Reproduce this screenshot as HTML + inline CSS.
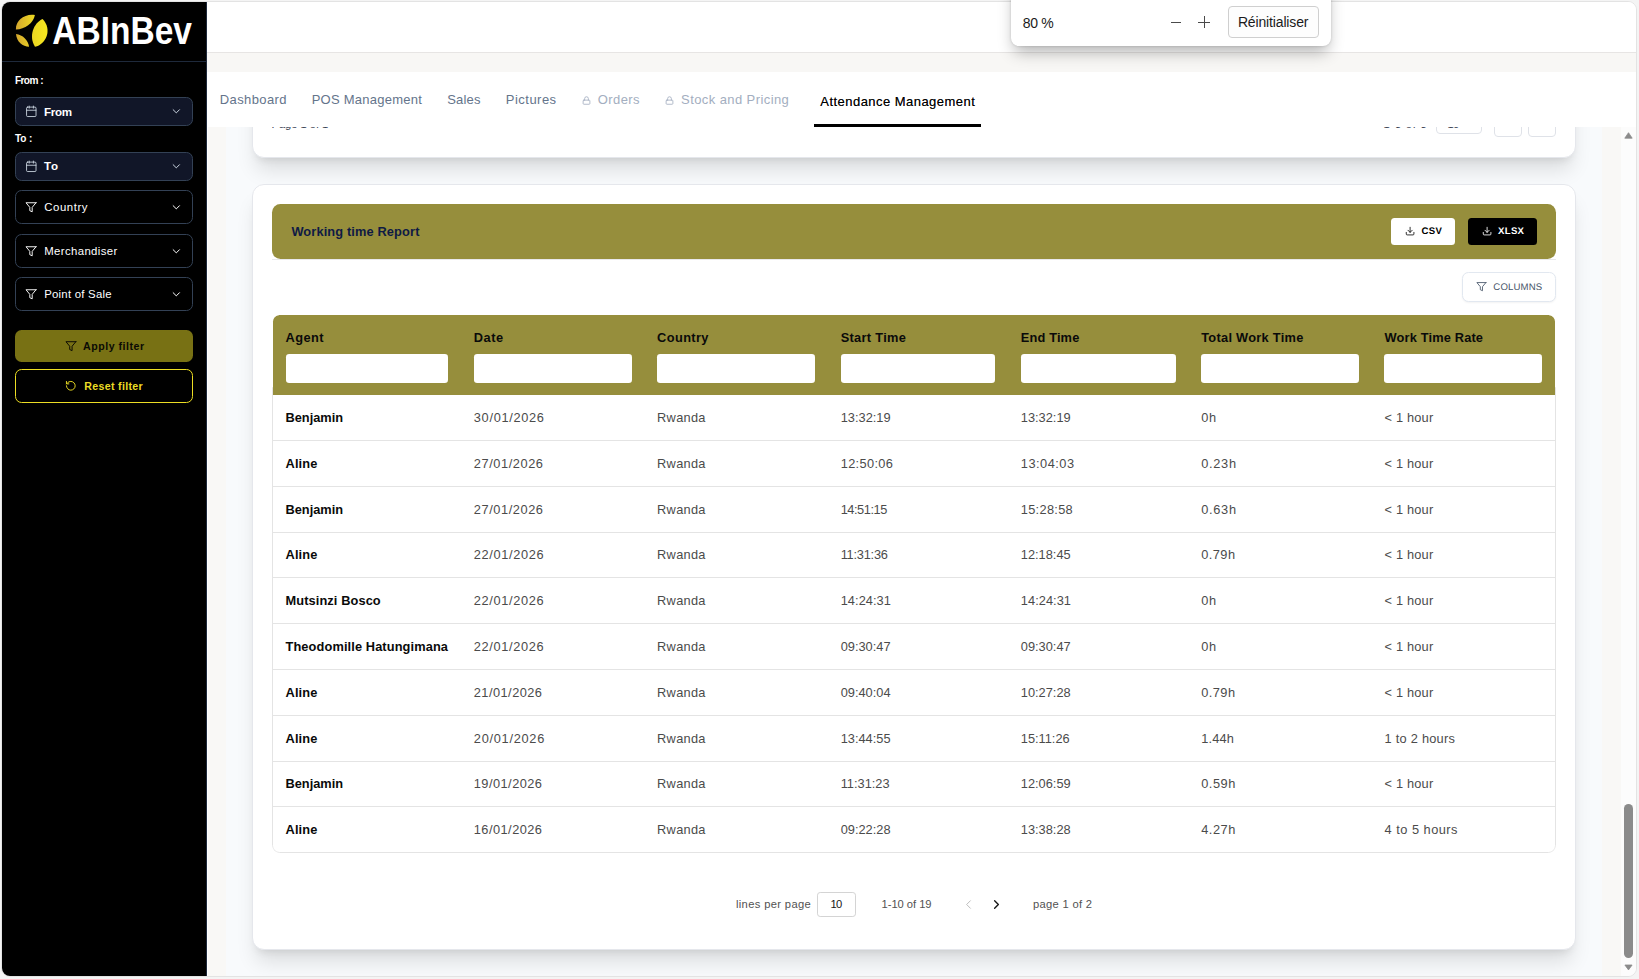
<!DOCTYPE html>
<html lang="en"><head><meta charset="utf-8"><title>Attendance Management</title>
<style>
html,body{margin:0;padding:0}
body{width:1639px;height:979px;overflow:hidden;background:#f4f4f4;font-family:"Liberation Sans", Arial, sans-serif;position:relative}
#win{position:absolute;left:1px;top:1px;width:1633.6px;height:974px;border:1px solid #e3e3e3;border-radius:9px;overflow:hidden;background:#fff}
#pg{position:absolute;left:-2px;top:-2px;width:1639px;height:979px}
.t{position:absolute;white-space:pre;line-height:1;display:block}
.sh{}
.gp{text-rendering:geometricPrecision}
.sb{text-shadow:0 0 .3px rgba(0,0,0,.55)}
.ic{position:absolute;display:block;overflow:visible}
#side{position:absolute;left:2px;top:2px;width:203.6px;height:974px;background:#000;border-right:1px solid #1e293b}
#side>*{margin-left:-2px;margin-top:-2px}
.sep{position:absolute;left:2px;width:205px;height:1px;background:#1e293b}
.sel{position:absolute;left:15.1px;width:177.7px;box-sizing:border-box;border:1px solid #334155;border-radius:6.5px;background:#000}
.sel.dk{background:#111628}
.btn{position:absolute;left:15.1px;width:177.7px;box-sizing:border-box;border-radius:6.5px}
.apply{background:#787114}
.reset{border:1px solid #ecdd24;background:#000}
#hdr{position:absolute;left:206.6px;top:2px;width:1430px;height:50px;background:#fff;border-bottom:1px solid #e7e5e4}
#strip{position:absolute;left:206.6px;top:53px;width:1430px;height:18.5px;background:#f8f7f5}
#tabs{position:absolute;left:206.6px;top:71.5px;width:1430px;height:55.5px;background:#fff}
#tabline{position:absolute;left:814px;top:124px;width:167.3px;height:3px;background:#000}
#scroll{position:absolute;left:208.4px;top:127px;width:1413.1px;height:850px;background:#f9f8f6;overflow:hidden}
#inner{position:absolute;left:17.6px;top:0;width:1376px;height:850px;background:#f8fafc}
.card{position:absolute;left:43.7px;width:1323.6px;background:#fff;border-radius:12px;box-sizing:border-box;border:1px solid #e5e7ec;box-shadow:0 16px 20px -4px rgba(0,0,0,.115),0 6px 8px -5px rgba(0,0,0,.11)}
#card1{top:-100px;height:131px}
#card2{top:56.9px;height:766.4px}
#clip1{position:absolute;left:207.5px;top:127px;width:1414px;height:14px;overflow:hidden}
#clip1>*{margin-left:-207.5px;margin-top:-127px}
.mini{position:absolute;box-sizing:border-box;border:1px solid #dfe2e8;border-radius:4px;background:#fff}
#chead{position:absolute;left:272.3px;top:204px;width:1283.7px;height:54.7px;background:#968e3c;border-radius:8.5px}
#cline{position:absolute;left:272.3px;top:258.7px;width:1283.7px;height:1px;background:#e8e8ea}
.xb{position:absolute;top:218px;height:27px;border-radius:3.5px}
#colbtn{position:absolute;left:1462.2px;top:272.3px;width:93.6px;height:29.3px;box-sizing:border-box;border:1px solid #e2e8f0;border-radius:6.5px;background:#fff;box-shadow:0 1px 2px rgba(0,0,0,.05)}
#tbl{position:absolute;left:272px;top:315px;width:1284px;height:538px;border-radius:7.5px;overflow:hidden;background:#fff}
#tbody{position:absolute;left:0;top:72px;width:1284px;height:466px;box-sizing:border-box;border:1px solid #e4e4e4;border-radius:0 0 7.5px 7.5px}
#thead{position:absolute;left:1px;top:0;width:1282px;height:79.6px;background:#968e3c;border-radius:6.5px 6.5px 0 0}
.rl{position:absolute;left:1px;width:1282px;height:1px;background:#e4e4e4}
.fin{position:absolute;top:354.3px;height:28.7px;background:#fff;border-radius:3.2px}
#lpp{position:absolute;left:817px;top:892px;width:38.8px;height:24.8px;box-sizing:border-box;border:1px solid #d4d4d4;border-radius:3.2px;background:#fff}
#sbar{position:absolute;left:1621px;top:127px;width:16px;height:850px;background:#fcfcfc}
#thumb{position:absolute;left:3.1px;top:676.8px;width:9px;height:154px;border-radius:4.5px;background:#8b8b8b}
#pop{position:absolute;left:0;top:0;width:1639px;height:100px}
#zp{position:absolute;left:1010.9px;top:-20px;width:320.2px;height:66.1px;background:#fff;border-radius:8px;box-shadow:0 9px 16px -3px rgba(0,0,0,.30),0 0 2.5px rgba(0,0,0,.16)}
.zl{position:absolute;background:#4a4a4a}
#zbtn{position:absolute;left:1228.3px;top:6.1px;width:90.5px;height:31.7px;box-sizing:border-box;border:1px solid #cfcfcf;border-radius:4px;background:#fdfdfd}
</style></head>
<body>
<div id="win"><div id="pg">
<div id="side">
<svg class="ic" style="left:14px;top:13px" width="180" height="36" viewBox="14 13 180 36">
<defs><linearGradient id="lg" x1="16" y1="0" x2="48" y2="0" gradientUnits="userSpaceOnUse"><stop offset="0" stop-color="#d3a62e"/><stop offset="0.55" stop-color="#ecd722"/><stop offset="1" stop-color="#f6e81f"/></linearGradient></defs>
<path fill="url(#lg)" d="M34.9 15.1 C25 13.4 15.3 20.4 15.9 29.5 C24.5 29.6 33.4 23.6 34.9 15.1 Z"/>
<path fill="url(#lg)" d="M16 34 C16.6 41.9 22.6 46.6 29.1 46.8 C28 40 22.8 34.8 16 34 Z"/>
<path fill="url(#lg)" d="M42.6 19 C33.4 23 28.4 36.5 35 46.8 C45.8 44.6 52.8 29.6 42.6 19 Z"/>
<text x="52.3" y="43.9" font-family='"Liberation Sans", Arial, sans-serif' font-weight="700" font-size="38.3" fill="#fff" textLength="139.7" lengthAdjust="spacingAndGlyphs">ABInBev</text>
</svg>
<div class="sep" style="top:61px"></div>
<span class="t " id="t0" style="left:14.90px;top:76.01px;font-size:10.1px;font-weight:700;color:#fff;letter-spacing:-0.560px;">From :</span>
<div class="sel dk" style="top:97.3px;height:28.4px"></div>
<svg class="ic" style="left:24.90px;top:104.90px" width="12.60" height="12.60" viewBox="0 0 24 24" fill="none" stroke="#cbd5e1" stroke-width="1.7" stroke-linecap="round" stroke-linejoin="round" ><path d="M8 2v4"/><path d="M16 2v4"/><rect x="3" y="4" width="18" height="18" rx="2"/><path d="M3 10h18"/></svg>
<span class="t " id="t1" style="left:44.10px;top:106.01px;font-size:11.6px;font-weight:700;color:#fff;letter-spacing:-0.357px;">From</span>
<svg class="ic" style="left:170.30px;top:105.40px" width="12.60" height="12.60" viewBox="0 0 24 24" fill="none" stroke="#cbd5e1" stroke-width="1.9" stroke-linecap="round" stroke-linejoin="round" ><path d="m6 9 6 6 6-6"/></svg>
<span class="t " id="t2" style="left:14.90px;top:134.01px;font-size:10.1px;font-weight:700;color:#fff;letter-spacing:-0.114px;">To :</span>
<div class="sel dk" style="top:152.3px;height:28.3px"></div>
<svg class="ic" style="left:24.90px;top:159.90px" width="12.60" height="12.60" viewBox="0 0 24 24" fill="none" stroke="#cbd5e1" stroke-width="1.7" stroke-linecap="round" stroke-linejoin="round" ><path d="M8 2v4"/><path d="M16 2v4"/><rect x="3" y="4" width="18" height="18" rx="2"/><path d="M3 10h18"/></svg>
<span class="t " id="t3" style="left:44.10px;top:160.01px;font-size:11.6px;font-weight:700;color:#fff;letter-spacing:0.699px;">To</span>
<svg class="ic" style="left:170.30px;top:160.40px" width="12.60" height="12.60" viewBox="0 0 24 24" fill="none" stroke="#cbd5e1" stroke-width="1.9" stroke-linecap="round" stroke-linejoin="round" ><path d="m6 9 6 6 6-6"/></svg>
<div class="sel" style="top:190.2px;height:33.7px"></div>
<svg class="ic" style="left:25.40px;top:201.20px" width="12.00" height="12.00" viewBox="0 0 24 24" fill="none" stroke="#fff" stroke-width="1.9" stroke-linecap="round" stroke-linejoin="round" ><path d="M22 3.5H2l7.6 9.2V19.4l4.8 2.2v-8.9L22 3.5z"/></svg>
<span class="t sh" id="t4" style="left:44.20px;top:202.01px;font-size:11.4px;font-weight:400;color:#fff;letter-spacing:0.568px;">Country</span>
<svg class="ic" style="left:170.30px;top:201.20px" width="12.60" height="12.60" viewBox="0 0 24 24" fill="none" stroke="#fff" stroke-width="1.9" stroke-linecap="round" stroke-linejoin="round" ><path d="m6 9 6 6 6-6"/></svg>
<div class="sel" style="top:234.0px;height:33.7px"></div>
<svg class="ic" style="left:25.40px;top:245.00px" width="12.00" height="12.00" viewBox="0 0 24 24" fill="none" stroke="#fff" stroke-width="1.9" stroke-linecap="round" stroke-linejoin="round" ><path d="M22 3.5H2l7.6 9.2V19.4l4.8 2.2v-8.9L22 3.5z"/></svg>
<span class="t sh" id="t5" style="left:44.20px;top:246.01px;font-size:11.4px;font-weight:400;color:#fff;letter-spacing:0.371px;">Merchandiser</span>
<svg class="ic" style="left:170.30px;top:245.00px" width="12.60" height="12.60" viewBox="0 0 24 24" fill="none" stroke="#fff" stroke-width="1.9" stroke-linecap="round" stroke-linejoin="round" ><path d="m6 9 6 6 6-6"/></svg>
<div class="sel" style="top:277.4px;height:33.7px"></div>
<svg class="ic" style="left:25.40px;top:288.40px" width="12.00" height="12.00" viewBox="0 0 24 24" fill="none" stroke="#fff" stroke-width="1.9" stroke-linecap="round" stroke-linejoin="round" ><path d="M22 3.5H2l7.6 9.2V19.4l4.8 2.2v-8.9L22 3.5z"/></svg>
<span class="t sh" id="t6" style="left:44.20px;top:289.01px;font-size:11.4px;font-weight:400;color:#fff;letter-spacing:0.234px;">Point of Sale</span>
<svg class="ic" style="left:170.30px;top:288.40px" width="12.60" height="12.60" viewBox="0 0 24 24" fill="none" stroke="#fff" stroke-width="1.9" stroke-linecap="round" stroke-linejoin="round" ><path d="m6 9 6 6 6-6"/></svg>
<div class="btn apply" style="top:330.1px;height:32px"></div>
<svg class="ic" style="left:64.60px;top:340.40px" width="11.80" height="11.80" viewBox="0 0 24 24" fill="none" stroke="#0b0a04" stroke-width="2" stroke-linecap="round" stroke-linejoin="round" ><path d="M22 3.5H2l7.6 9.2V19.4l4.8 2.2v-8.9L22 3.5z"/></svg>
<span class="t " id="t7" style="left:83.10px;top:341.01px;font-size:10.6px;font-weight:700;color:#0b0a04;letter-spacing:0.510px;">Apply filter</span>
<div class="btn reset" style="top:369.2px;height:33.7px"></div>
<svg class="ic" style="left:65.40px;top:379.80px" width="11.60" height="11.60" viewBox="0 0 24 24" fill="none" stroke="#ecdd24" stroke-width="2" stroke-linecap="round" stroke-linejoin="round" ><path d="M3 12a9 9 0 1 0 9-9 9.75 9.75 0 0 0-6.74 2.74L3 8"/><path d="M3 3v5h5"/></svg>
<span class="t " id="t8" style="left:84.20px;top:381.01px;font-size:10.6px;font-weight:700;color:#ecdd24;letter-spacing:0.343px;">Reset filter</span>
</div>
<div id="hdr"></div><div id="strip"></div><div id="tabs"></div>
<span class="t " id="t9" style="left:219.70px;top:93.00px;font-size:13px;font-weight:400;color:#64748b;letter-spacing:0.413px;">Dashboard</span>
<span class="t " id="t10" style="left:311.70px;top:93.00px;font-size:13px;font-weight:400;color:#64748b;letter-spacing:0.251px;">POS Management</span>
<span class="t " id="t11" style="left:447.20px;top:93.00px;font-size:13px;font-weight:400;color:#64748b;letter-spacing:0.195px;">Sales</span>
<span class="t " id="t12" style="left:505.80px;top:93.00px;font-size:13px;font-weight:400;color:#64748b;letter-spacing:0.477px;">Pictures</span>
<svg class="ic" style="left:582.40px;top:95.60px" width="9.00" height="9.00" viewBox="0 0 24 24" fill="none" stroke="#a3aec0" stroke-width="2.2" stroke-linecap="round" stroke-linejoin="round" ><rect x="3" y="11" width="18" height="11" rx="2"/><path d="M7 11V7a5 5 0 0 1 10 0v4"/></svg>
<span class="t " id="t13" style="left:597.80px;top:93.00px;font-size:13px;font-weight:400;color:#a3aec0;letter-spacing:0.415px;">Orders</span>
<svg class="ic" style="left:665.40px;top:95.60px" width="9.00" height="9.00" viewBox="0 0 24 24" fill="none" stroke="#a3aec0" stroke-width="2.2" stroke-linecap="round" stroke-linejoin="round" ><rect x="3" y="11" width="18" height="11" rx="2"/><path d="M7 11V7a5 5 0 0 1 10 0v4"/></svg>
<span class="t " id="t14" style="left:681.10px;top:93.00px;font-size:13px;font-weight:400;color:#a3aec0;letter-spacing:0.409px;">Stock and Pricing</span>
<span class="t sb" id="t15" style="left:820.30px;top:95.00px;font-size:13px;font-weight:400;color:#000;letter-spacing:0.461px;">Attendance Management</span>
<div id="tabline"></div>
<div id="scroll"><div id="inner"></div>
<div class="card" id="card1"></div>
<div class="card" id="card2"></div>
</div>
<div id="clip1">
<span class="t " id="t16" style="left:271.50px;top:119.00px;font-size:11.2px;font-weight:400;color:#374151;letter-spacing:-0.045px;">Page 1 of 1</span>
<span class="t " id="t17" style="left:1383.50px;top:119.00px;font-size:11.2px;font-weight:400;color:#374151;letter-spacing:0.750px;">1-3 of 3</span>
<div class="mini" style="left:1436px;top:108px;width:46px;height:25.5px"></div>
<div class="mini" style="left:1494.3px;top:108px;width:27.6px;height:29.4px"></div>
<div class="mini" style="left:1528.2px;top:108px;width:27.6px;height:29.4px"></div>
<span class="t " id="t18" style="left:1447.50px;top:119.00px;font-size:11.2px;font-weight:400;color:#374151;letter-spacing:-0.669px;">10</span>
</div>
<div id="chead"></div><div id="cline"></div>
<span class="t " id="t19" style="left:291.40px;top:226.01px;font-size:12.8px;font-weight:700;color:#0f1a44;letter-spacing:0.133px;">Working time Report</span>
<div class="xb" style="left:1391.1px;width:63.9px;background:#fff"></div>
<svg class="ic" style="left:1404.60px;top:226.00px" width="10.20" height="10.20" viewBox="0 0 24 24" fill="none" stroke="#111" stroke-width="2" stroke-linecap="round" stroke-linejoin="round" ><path d="M21 15v4a2 2 0 0 1-2 2H5a2 2 0 0 1-2-2v-4"/><path d="m7 10 5 5 5-5"/><path d="M12 15V3"/></svg>
<span class="t gp" id="t20" style="left:1421.50px;top:227.01px;font-size:9.6px;font-weight:700;color:#000;letter-spacing:0.319px;">CSV</span>
<div class="xb" style="left:1468px;width:69px;background:#000"></div>
<svg class="ic" style="left:1481.50px;top:226.00px" width="10.20" height="10.20" viewBox="0 0 24 24" fill="none" stroke="#fff" stroke-width="2" stroke-linecap="round" stroke-linejoin="round" ><path d="M21 15v4a2 2 0 0 1-2 2H5a2 2 0 0 1-2-2v-4"/><path d="m7 10 5 5 5-5"/><path d="M12 15V3"/></svg>
<span class="t gp" id="t21" style="left:1498.10px;top:227.01px;font-size:9.6px;font-weight:700;color:#fff;letter-spacing:0.270px;">XLSX</span>
<div id="colbtn"></div>
<svg class="ic" style="left:1476.20px;top:281.40px" width="10.80" height="10.80" viewBox="0 0 24 24" fill="none" stroke="#475569" stroke-width="1.9" stroke-linecap="round" stroke-linejoin="round" ><path d="M22 3.5H2l7.6 9.2V19.4l4.8 2.2v-8.9L22 3.5z"/></svg>
<span class="t gp" id="t22" style="left:1493.30px;top:283.01px;font-size:9.6px;font-weight:400;color:#475569;letter-spacing:0.165px;">COLUMNS</span>
<div id="tbl"><div id="tbody"></div><div id="thead"></div>
<div class="rl" style="top:125px"></div>
<div class="rl" style="top:171px"></div>
<div class="rl" style="top:217px"></div>
<div class="rl" style="top:262px"></div>
<div class="rl" style="top:308px"></div>
<div class="rl" style="top:354px"></div>
<div class="rl" style="top:400px"></div>
<div class="rl" style="top:446px"></div>
<div class="rl" style="top:491px"></div>
</div>
<span class="t " id="t23" style="left:285.50px;top:332.01px;font-size:12.8px;font-weight:700;color:#0a0a0a;letter-spacing:0.458px;">Agent</span>
<div class="fin" style="left:285.8px;width:162.2px"></div>
<span class="t " id="t24" style="left:473.80px;top:332.01px;font-size:12.8px;font-weight:700;color:#0a0a0a;letter-spacing:0.549px;">Date</span>
<div class="fin" style="left:474.0px;width:157.8px"></div>
<span class="t " id="t25" style="left:657.10px;top:332.01px;font-size:12.8px;font-weight:700;color:#0a0a0a;letter-spacing:0.389px;">Country</span>
<div class="fin" style="left:657.0px;width:158.0px"></div>
<span class="t " id="t26" style="left:840.70px;top:332.01px;font-size:12.8px;font-weight:700;color:#0a0a0a;letter-spacing:0.315px;">Start Time</span>
<div class="fin" style="left:840.8px;width:154.2px"></div>
<span class="t " id="t27" style="left:1020.80px;top:332.01px;font-size:12.8px;font-weight:700;color:#0a0a0a;letter-spacing:0.160px;">End Time</span>
<div class="fin" style="left:1021.0px;width:155.0px"></div>
<span class="t " id="t28" style="left:1201.20px;top:332.01px;font-size:12.8px;font-weight:700;color:#0a0a0a;letter-spacing:0.290px;">Total Work Time</span>
<div class="fin" style="left:1200.8px;width:158.0px"></div>
<span class="t " id="t29" style="left:1384.60px;top:332.01px;font-size:12.8px;font-weight:700;color:#0a0a0a;letter-spacing:0.165px;">Work Time Rate</span>
<div class="fin" style="left:1383.8px;width:158.2px"></div>
<span class="t " id="t30" style="left:285.50px;top:412.01px;font-size:12.8px;font-weight:700;color:#0a0a0a;">Benjamin</span>
<span class="t " id="t31" style="left:473.80px;top:412.01px;font-size:12.8px;font-weight:400;color:#4b4b4b;letter-spacing:0.681px;">30/01/2026</span>
<span class="t " id="t32" style="left:657.10px;top:412.01px;font-size:12.8px;font-weight:400;color:#4b4b4b;letter-spacing:0.289px;">Rwanda</span>
<span class="t " id="t33" style="left:840.70px;top:412.01px;font-size:12.8px;font-weight:400;color:#4b4b4b;letter-spacing:0.010px;">13:32:19</span>
<span class="t " id="t34" style="left:1020.80px;top:412.01px;font-size:12.8px;font-weight:400;color:#4b4b4b;letter-spacing:0.010px;">13:32:19</span>
<span class="t " id="t35" style="left:1201.20px;top:412.01px;font-size:12.8px;font-weight:400;color:#4b4b4b;letter-spacing:0.750px;">0h</span>
<span class="t " id="t36" style="left:1384.60px;top:412.01px;font-size:12.8px;font-weight:400;color:#4b4b4b;letter-spacing:0.181px;">&lt; 1 hour</span>
<span class="t " id="t37" style="left:285.50px;top:458.01px;font-size:12.8px;font-weight:700;color:#0a0a0a;letter-spacing:0.150px;">Aline</span>
<span class="t " id="t38" style="left:473.80px;top:458.01px;font-size:12.8px;font-weight:400;color:#4b4b4b;letter-spacing:0.570px;">27/01/2026</span>
<span class="t " id="t39" style="left:657.10px;top:458.01px;font-size:12.8px;font-weight:400;color:#4b4b4b;letter-spacing:0.289px;">Rwanda</span>
<span class="t " id="t40" style="left:840.70px;top:458.01px;font-size:12.8px;font-weight:400;color:#4b4b4b;letter-spacing:0.338px;">12:50:06</span>
<span class="t " id="t41" style="left:1020.80px;top:458.01px;font-size:12.8px;font-weight:400;color:#4b4b4b;letter-spacing:0.495px;">13:04:03</span>
<span class="t " id="t42" style="left:1201.20px;top:458.01px;font-size:12.8px;font-weight:400;color:#4b4b4b;letter-spacing:0.716px;">0.23h</span>
<span class="t " id="t43" style="left:1384.60px;top:458.01px;font-size:12.8px;font-weight:400;color:#4b4b4b;letter-spacing:0.181px;">&lt; 1 hour</span>
<span class="t " id="t44" style="left:285.50px;top:504.01px;font-size:12.8px;font-weight:700;color:#0a0a0a;">Benjamin</span>
<span class="t " id="t45" style="left:473.80px;top:504.01px;font-size:12.8px;font-weight:400;color:#4b4b4b;letter-spacing:0.570px;">27/01/2026</span>
<span class="t " id="t46" style="left:657.10px;top:504.01px;font-size:12.8px;font-weight:400;color:#4b4b4b;letter-spacing:0.289px;">Rwanda</span>
<span class="t " id="t47" style="left:840.70px;top:504.01px;font-size:12.8px;font-weight:400;color:#4b4b4b;letter-spacing:-0.462px;">14:51:15</span>
<span class="t " id="t48" style="left:1020.80px;top:504.01px;font-size:12.8px;font-weight:400;color:#4b4b4b;letter-spacing:0.295px;">15:28:58</span>
<span class="t " id="t49" style="left:1201.20px;top:504.01px;font-size:12.8px;font-weight:400;color:#4b4b4b;letter-spacing:0.716px;">0.63h</span>
<span class="t " id="t50" style="left:1384.60px;top:504.01px;font-size:12.8px;font-weight:400;color:#4b4b4b;letter-spacing:0.181px;">&lt; 1 hour</span>
<span class="t " id="t51" style="left:285.50px;top:549.01px;font-size:12.8px;font-weight:700;color:#0a0a0a;letter-spacing:0.150px;">Aline</span>
<span class="t " id="t52" style="left:473.80px;top:549.01px;font-size:12.8px;font-weight:400;color:#4b4b4b;letter-spacing:0.648px;">22/01/2026</span>
<span class="t " id="t53" style="left:657.10px;top:549.01px;font-size:12.8px;font-weight:400;color:#4b4b4b;letter-spacing:0.289px;">Rwanda</span>
<span class="t " id="t54" style="left:840.70px;top:549.01px;font-size:12.8px;font-weight:400;color:#4b4b4b;letter-spacing:-0.240px;">11:31:36</span>
<span class="t " id="t55" style="left:1020.80px;top:549.01px;font-size:12.8px;font-weight:400;color:#4b4b4b;letter-spacing:0.010px;">12:18:45</span>
<span class="t " id="t56" style="left:1201.20px;top:549.01px;font-size:12.8px;font-weight:400;color:#4b4b4b;letter-spacing:0.466px;">0.79h</span>
<span class="t " id="t57" style="left:1384.60px;top:549.01px;font-size:12.8px;font-weight:400;color:#4b4b4b;letter-spacing:0.181px;">&lt; 1 hour</span>
<span class="t " id="t58" style="left:285.50px;top:595.01px;font-size:12.8px;font-weight:700;color:#0a0a0a;letter-spacing:0.103px;">Mutsinzi Bosco</span>
<span class="t " id="t59" style="left:473.80px;top:595.01px;font-size:12.8px;font-weight:400;color:#4b4b4b;letter-spacing:0.648px;">22/01/2026</span>
<span class="t " id="t60" style="left:657.10px;top:595.01px;font-size:12.8px;font-weight:400;color:#4b4b4b;letter-spacing:0.289px;">Rwanda</span>
<span class="t " id="t61" style="left:840.70px;top:595.01px;font-size:12.8px;font-weight:400;color:#4b4b4b;letter-spacing:0.053px;">14:24:31</span>
<span class="t " id="t62" style="left:1020.80px;top:595.01px;font-size:12.8px;font-weight:400;color:#4b4b4b;letter-spacing:0.053px;">14:24:31</span>
<span class="t " id="t63" style="left:1201.20px;top:595.01px;font-size:12.8px;font-weight:400;color:#4b4b4b;letter-spacing:0.750px;">0h</span>
<span class="t " id="t64" style="left:1384.60px;top:595.01px;font-size:12.8px;font-weight:400;color:#4b4b4b;letter-spacing:0.181px;">&lt; 1 hour</span>
<span class="t " id="t65" style="left:285.50px;top:641.01px;font-size:12.8px;font-weight:700;color:#0a0a0a;letter-spacing:0.114px;">Theodomille Hatungimana</span>
<span class="t " id="t66" style="left:473.80px;top:641.01px;font-size:12.8px;font-weight:400;color:#4b4b4b;letter-spacing:0.648px;">22/01/2026</span>
<span class="t " id="t67" style="left:657.10px;top:641.01px;font-size:12.8px;font-weight:400;color:#4b4b4b;letter-spacing:0.289px;">Rwanda</span>
<span class="t " id="t68" style="left:840.70px;top:641.01px;font-size:12.8px;font-weight:400;color:#4b4b4b;">09:30:47</span>
<span class="t " id="t69" style="left:1020.80px;top:641.01px;font-size:12.8px;font-weight:400;color:#4b4b4b;">09:30:47</span>
<span class="t " id="t70" style="left:1201.20px;top:641.01px;font-size:12.8px;font-weight:400;color:#4b4b4b;letter-spacing:0.750px;">0h</span>
<span class="t " id="t71" style="left:1384.60px;top:641.01px;font-size:12.8px;font-weight:400;color:#4b4b4b;letter-spacing:0.181px;">&lt; 1 hour</span>
<span class="t " id="t72" style="left:285.50px;top:687.01px;font-size:12.8px;font-weight:700;color:#0a0a0a;letter-spacing:0.150px;">Aline</span>
<span class="t " id="t73" style="left:473.80px;top:687.01px;font-size:12.8px;font-weight:400;color:#4b4b4b;letter-spacing:0.459px;">21/01/2026</span>
<span class="t " id="t74" style="left:657.10px;top:687.01px;font-size:12.8px;font-weight:400;color:#4b4b4b;letter-spacing:0.289px;">Rwanda</span>
<span class="t " id="t75" style="left:840.70px;top:687.01px;font-size:12.8px;font-weight:400;color:#4b4b4b;">09:40:04</span>
<span class="t " id="t76" style="left:1020.80px;top:687.01px;font-size:12.8px;font-weight:400;color:#4b4b4b;">10:27:28</span>
<span class="t " id="t77" style="left:1201.20px;top:687.01px;font-size:12.8px;font-weight:400;color:#4b4b4b;letter-spacing:0.466px;">0.79h</span>
<span class="t " id="t78" style="left:1384.60px;top:687.01px;font-size:12.8px;font-weight:400;color:#4b4b4b;letter-spacing:0.181px;">&lt; 1 hour</span>
<span class="t " id="t79" style="left:285.50px;top:733.01px;font-size:12.8px;font-weight:700;color:#0a0a0a;letter-spacing:0.150px;">Aline</span>
<span class="t " id="t80" style="left:473.80px;top:733.01px;font-size:12.8px;font-weight:400;color:#4b4b4b;letter-spacing:0.715px;">20/01/2026</span>
<span class="t " id="t81" style="left:657.10px;top:733.01px;font-size:12.8px;font-weight:400;color:#4b4b4b;letter-spacing:0.289px;">Rwanda</span>
<span class="t " id="t82" style="left:840.70px;top:733.01px;font-size:12.8px;font-weight:400;color:#4b4b4b;">13:44:55</span>
<span class="t " id="t83" style="left:1020.80px;top:733.01px;font-size:12.8px;font-weight:400;color:#4b4b4b;">15:11:26</span>
<span class="t " id="t84" style="left:1201.20px;top:733.01px;font-size:12.8px;font-weight:400;color:#4b4b4b;letter-spacing:0.141px;">1.44h</span>
<span class="t " id="t85" style="left:1384.60px;top:733.01px;font-size:12.8px;font-weight:400;color:#4b4b4b;letter-spacing:0.246px;">1 to 2 hours</span>
<span class="t " id="t86" style="left:285.50px;top:778.01px;font-size:12.8px;font-weight:700;color:#0a0a0a;">Benjamin</span>
<span class="t " id="t87" style="left:473.80px;top:778.01px;font-size:12.8px;font-weight:400;color:#4b4b4b;letter-spacing:0.459px;">19/01/2026</span>
<span class="t " id="t88" style="left:657.10px;top:778.01px;font-size:12.8px;font-weight:400;color:#4b4b4b;letter-spacing:0.289px;">Rwanda</span>
<span class="t " id="t89" style="left:840.70px;top:778.01px;font-size:12.8px;font-weight:400;color:#4b4b4b;">11:31:23</span>
<span class="t " id="t90" style="left:1020.80px;top:778.01px;font-size:12.8px;font-weight:400;color:#4b4b4b;">12:06:59</span>
<span class="t " id="t91" style="left:1201.20px;top:778.01px;font-size:12.8px;font-weight:400;color:#4b4b4b;letter-spacing:0.541px;">0.59h</span>
<span class="t " id="t92" style="left:1384.60px;top:778.01px;font-size:12.8px;font-weight:400;color:#4b4b4b;letter-spacing:0.181px;">&lt; 1 hour</span>
<span class="t " id="t93" style="left:285.50px;top:824.01px;font-size:12.8px;font-weight:700;color:#0a0a0a;letter-spacing:0.150px;">Aline</span>
<span class="t " id="t94" style="left:473.80px;top:824.01px;font-size:12.8px;font-weight:400;color:#4b4b4b;letter-spacing:0.459px;">16/01/2026</span>
<span class="t " id="t95" style="left:657.10px;top:824.01px;font-size:12.8px;font-weight:400;color:#4b4b4b;letter-spacing:0.289px;">Rwanda</span>
<span class="t " id="t96" style="left:840.70px;top:824.01px;font-size:12.8px;font-weight:400;color:#4b4b4b;">09:22:28</span>
<span class="t " id="t97" style="left:1020.80px;top:824.01px;font-size:12.8px;font-weight:400;color:#4b4b4b;">13:38:28</span>
<span class="t " id="t98" style="left:1201.20px;top:824.01px;font-size:12.8px;font-weight:400;color:#4b4b4b;letter-spacing:0.541px;">4.27h</span>
<span class="t " id="t99" style="left:1384.60px;top:824.01px;font-size:12.8px;font-weight:400;color:#4b4b4b;letter-spacing:0.482px;">4 to 5 hours</span>
<span class="t " id="t100" style="left:735.90px;top:899.00px;font-size:11.2px;font-weight:400;color:#525252;letter-spacing:0.353px;">lines per page</span>
<div id="lpp"></div>
<span class="t " id="t101" style="left:830.40px;top:899.00px;font-size:11.2px;font-weight:400;color:#171717;letter-spacing:-0.569px;">10</span>
<span class="t " id="t102" style="left:881.50px;top:899.00px;font-size:11.2px;font-weight:400;color:#525252;letter-spacing:-0.034px;">1-10 of 19</span>
<svg class="ic" style="left:960.60px;top:896.60px" width="15.00" height="15.00" viewBox="0 0 24 24" fill="none" stroke="#bdbdbd" stroke-width="1.6" stroke-linecap="round" stroke-linejoin="round" ><path d="m15 18-6-6 6-6"/></svg>
<svg class="ic" style="left:989.00px;top:896.60px" width="15.00" height="15.00" viewBox="0 0 24 24" fill="none" stroke="#171717" stroke-width="2.2" stroke-linecap="round" stroke-linejoin="round" ><path d="m9 18 6-6-6-6"/></svg>
<span class="t " id="t103" style="left:1032.90px;top:899.00px;font-size:11.2px;font-weight:400;color:#525252;letter-spacing:0.318px;">page 1 of 2</span>
<div id="sbar"><div id="thumb"></div><svg class="ic" style="left:3px;top:4px" width="9" height="8" viewBox="0 0 9 8"><path d="M4.5 1.7 L8.2 7.2 H0.8 Z" fill="#8b8b8b" stroke="#8b8b8b" stroke-width="0.8" stroke-linejoin="round"/></svg><svg class="ic" style="left:3px;top:837px" width="9" height="8" viewBox="0 0 9 8"><path d="M0.9 1 H8.1 L4.5 5.9 Z" fill="#8b8b8b" stroke="#8b8b8b" stroke-width="0.8" stroke-linejoin="round"/></svg></div>
</div></div><div id="pop">
<div id="zp"></div>
<span class="t " id="t104" style="left:1022.70px;top:16.01px;font-size:14px;font-weight:400;color:#1b1b1b;letter-spacing:-0.281px;">80 %</span>
<div class="zl" style="left:1170.5px;top:21.6px;width:10.5px;height:1px"></div>
<div class="zl" style="left:1198px;top:21.6px;width:12px;height:1px"></div>
<div class="zl" style="left:1203.5px;top:16px;width:1px;height:12px"></div>
<div id="zbtn"></div>
<span class="t " id="t105" style="left:1237.90px;top:15.01px;font-size:14px;font-weight:400;color:#1b1b1b;letter-spacing:-0.148px;">Réinitialiser</span>
</div>
</body></html>
